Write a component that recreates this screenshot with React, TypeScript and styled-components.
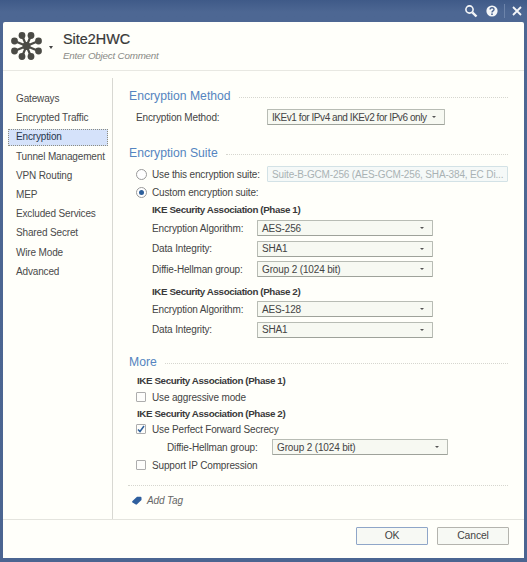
import styled, { createGlobalStyle } from "styled-components";

const Global = createGlobalStyle`
  html, body { margin: 0; padding: 0; }
  body { background: #4a6491; font-family: "Liberation Sans", Arial, sans-serif; }
`;

const Frame = styled.div`
  width: 527px;
  height: 562px;
  background: linear-gradient(#3f5a88, #4d6793 12px, #4b6591);
  display: flex;
  flex-direction: column;
  padding: 0 3px 4px;
  box-sizing: border-box;
  overflow: hidden;
`;

const TitleBar = styled.div`
  height: 22px;
  flex: none;
  display: flex;
  align-items: center;
  justify-content: flex-end;
  padding-right: 2px;
  color: #f4f6f8;
  svg { display: block; }
`;

const HelpIcon = styled.svg`
  margin-left: 8px;
`;

const TitleSep = styled.span`
  width: 1px;
  height: 14px;
  background: #6d84aa;
  margin: 0 7px 0 6px;
`;

const Dialog = styled.div`
  flex: 1;
  min-height: 0;
  background: #fffffa;
  border-radius: 2px 2px 0 0;
  display: flex;
  flex-direction: column;
  color: #444;
  letter-spacing: -0.15px;
`;

const Header = styled.div`
  height: 49px;
  flex: none;
  box-sizing: border-box;
  border-bottom: 1px solid #e8e8e2;
  display: flex;
  align-items: center;
  padding-left: 8px;
`;

const Caret = styled.span`
  width: 0;
  height: 0;
  margin: 3px 10px 0 7px;
  border-left: 2.5px solid transparent;
  border-right: 2.5px solid transparent;
  border-top: 3px solid #444;
`;

const HeadText = styled.div`
  display: flex;
  flex-direction: column;
`;

const ObjectName = styled.div`
  font-size: 14.4px;
  line-height: 19px;
  color: #383838;
  letter-spacing: 0;
  -webkit-text-stroke: 0.2px #383838;
`;

const Comment = styled.div`
  font-size: 9.8px;
  line-height: 13px;
  font-style: italic;
  letter-spacing: -0.2px;
  color: #8a8a86;
`;

const Main = styled.div`
  flex: 1;
  min-height: 0;
  display: flex;
  padding-top: 7px;
`;

const Sidebar = styled.div`
  width: 110px;
  height: 442px;
  box-sizing: border-box;
  flex: none;
  border-right: 1px solid #d8d8d2;
  padding: 13px 4px 0 5px;
  display: flex;
  flex-direction: column;
  gap: 2.2px;
`;

const NavItem = styled.div<{ $active?: boolean }>`
  height: 17px;
  line-height: 16px;
  font-size: 10px;
  padding-left: 8px;
  box-sizing: border-box;
  white-space: nowrap;
  color: #4a4a4a;
  ${(p) => p.$active && `
    background: #d5e2fa;
    outline: 1px dotted #8d8d80;
    outline-offset: -1px;
    color: #26364e;
  `}
`;

const Content = styled.div`
  flex: 1;
  padding: 0 16px 0 15px;
  display: flex;
  flex-direction: column;
`;

const Heading = styled.div<{ $gap?: number }>`
  display: flex;
  align-items: center;
  gap: 8px;
  height: 18px;
  margin-top: ${(p) => p.$gap ?? 0}px;
  padding-left: 1px;
  color: #5585c0;
  font-size: 12.2px;
  letter-spacing: 0;
  white-space: nowrap;
  &::after {
    content: "";
    flex: 1;
    border-top: 1px dotted #d6d6cf;
    margin-top: 2px;
  }
`;

const Row = styled.div<{ $indent?: number; $h?: number; $label?: number; $top?: number }>`
  display: flex;
  align-items: center;
  height: ${(p) => p.$h ?? 16}px;
  margin-top: ${(p) => p.$top ?? 0}px;
  padding-left: ${(p) => p.$indent ?? 0}px;
  font-size: 10px;
  white-space: nowrap;
  & > label {
    width: ${(p) => p.$label ?? 105}px;
    flex: none;
  }
`;

const Bold = styled(Row)`
  font-weight: 700;
  color: #3a3a3a;
  font-size: 9.8px;
  letter-spacing: -0.4px;
`;

const Select = styled.div<{ $w: number; $disabled?: boolean; $tight?: boolean }>`
  width: ${(p) => p.$w}px;
  height: 16px;
  flex: none;
  box-sizing: border-box;
  display: flex;
  align-items: center;
  justify-content: space-between;
  padding: 0 8px 0 4px;
  letter-spacing: ${(p) => (p.$tight ? "-0.44px" : "inherit")};
  background: ${(p) => (p.$disabled ? "#f5f9f8" : "#f7f9f2")};
  border: 1px solid ${(p) => (p.$disabled ? "#d3e2e6" : "#b8bcb4")};
  border-bottom-color: ${(p) => (p.$disabled ? "#d3e2e6" : "#9ea29a")};
  border-radius: 1px;
  color: ${(p) => (p.$disabled ? "#a9b2b4" : "#444")};
  overflow: hidden;
  &::after {
    content: "";
    flex: none;
    margin-left: 4px;
    border-left: 2px solid transparent;
    border-right: 2px solid transparent;
    border-top: 2px solid ${(p) => (p.$disabled ? "#a9b2b4" : "#555")};
  }
`;

const Radio = styled.span<{ $on?: boolean }>`
  width: 11px;
  height: 11px;
  flex: none;
  margin-right: 5px;
  box-sizing: border-box;
  border-radius: 50%;
  border: 1px solid #9a9a9a;
  background: #fff;
  display: flex;
  align-items: center;
  justify-content: center;
  &::after {
    content: "";
    width: 5px;
    height: 5px;
    border-radius: 50%;
    background: ${(p) => (p.$on ? "#2d5f9a" : "transparent")};
  }
`;

const Check = styled.span`
  width: 10px;
  height: 10px;
  flex: none;
  margin-right: 6px;
  box-sizing: border-box;
  border: 1px solid #adadad;
  border-radius: 1px;
  background: #fdfdfb;
  display: flex;
  svg { display: block; }
`;

const TagRow = styled.div`
  border-top: 1px dotted #d6d6cf;
  margin-top: 12px;
  padding: 6px 0 0 4px;
  display: flex;
  align-items: center;
  gap: 5px;
  font-size: 10px;
  font-style: italic;
  color: #666;
  height: 16px;
`;

const Footer = styled.div`
  height: 31px;
  flex: none;
  border-top: 1px solid #e4e4de;
  display: flex;
  justify-content: flex-end;
  align-items: flex-start;
  gap: 9px;
  padding: 7px 15px 0 0;
`;

const Button = styled.div<{ $primary?: boolean }>`
  width: 72px;
  height: 18px;
  box-sizing: border-box;
  border: 1px solid ${(p) => (p.$primary ? "#8fa6c8" : "#b4b4ae")};
  border-radius: 1px;
  background: #f7f9f4;
  font-size: 10.4px;
  line-height: 16px;
  text-align: center;
  color: #444;
`;

const Logo = () => {
  const nodes = [
    [11, 4], [20, 4], [3.5, 9.5], [27.5, 9.5], [3.5, 19.5], [27.5, 19.5], [11, 25], [20, 25],
  ];
  return (
    <svg width="31" height="30" viewBox="0 0 31 29">
      {nodes.map(([x, y], i) => (
        <line key={i} x1="15.5" y1="14.5" x2={x} y2={y} stroke="#4b4b45" strokeWidth="2.2" />
      ))}
      {nodes.map(([x, y], i) => (
        <circle key={i} cx={x} cy={y} r="3.4" fill="#4b4b45" />
      ))}
      <circle cx="15.5" cy="14.5" r="4" fill="#4b4b45" />
    </svg>
  );
};

const navItems = [
  "Gateways",
  "Encrypted Traffic",
  "Encryption",
  "Tunnel Management",
  "VPN Routing",
  "MEP",
  "Excluded Services",
  "Shared Secret",
  "Wire Mode",
  "Advanced",
];

export default function App() {
  return (
    <>
      <Global />
      <Frame>
        <TitleBar>
          <svg width="14" height="14" viewBox="0 0 14 14" fill="none" stroke="currentColor">
            <circle cx="5.5" cy="5.5" r="3.6" strokeWidth="1.6" />
            <path d="M8.3 8.3l4.2 4.2" strokeWidth="2.4" />
          </svg>
          <HelpIcon width="12" height="12" viewBox="0 0 12 12">
            <circle cx="6" cy="6" r="5.6" fill="currentColor" />
            <path d="M4.1 4.6c0-2.4 3.9-2.4 3.9-.2 0 1.4-2 1.5-2 3" fill="none" stroke="#4b6591" strokeWidth="1.4" />
            <circle cx="6" cy="9.2" r="0.9" fill="#4b6591" />
          </HelpIcon>
          <TitleSep />
          <svg width="10" height="10" viewBox="0 0 10 10" stroke="currentColor" strokeWidth="1.8">
            <path d="M1 1l8 8M9 1l-8 8" />
          </svg>
        </TitleBar>
        <Dialog>
          <Header>
            <Logo />
            <Caret />
            <HeadText>
              <ObjectName>Site2HWC</ObjectName>
              <Comment>Enter Object Comment</Comment>
            </HeadText>
          </Header>
          <Main>
            <Sidebar>
              {navItems.map((n) => (
                <NavItem key={n} $active={n === "Encryption"}>{n}</NavItem>
              ))}
            </Sidebar>
            <Content>
              <Heading $gap={9}>Encryption Method</Heading>
              <Row $indent={8} $h={16} $label={131} $top={4}>
                <label>Encryption Method:</label>
                <Select $w={178} $tight>IKEv1 for IPv4 and IKEv2 for IPv6 only</Select>
              </Row>
              <Heading $gap={19}>Encryption Suite</Heading>
              <Row $indent={8} $h={18} $label={115} $top={3}>
                <Radio />
                <label>Use this encryption suite:</label>
                <Select $w={241} $disabled>Suite-B-GCM-256 (AES-GCM-256, SHA-384, EC Di...</Select>
              </Row>
              <Row $indent={8} $h={18}>
                <Radio $on />
                Custom encryption suite:
              </Row>
              <Bold $indent={24} $h={16}>IKE Security Association (Phase 1)</Bold>
              <Row $indent={24} $h={20} $top={1}>
                <label>Encryption Algorithm:</label>
                <Select $w={176}>AES-256</Select>
              </Row>
              <Row $indent={24} $h={21}>
                <label>Data Integrity:</label>
                <Select $w={176}>SHA1</Select>
              </Row>
              <Row $indent={24} $h={20}>
                <label>Diffie-Hellman group:</label>
                <Select $w={176}>Group 2 (1024 bit)</Select>
              </Row>
              <Bold $indent={24} $h={16} $top={4}>IKE Security Association (Phase 2)</Bold>
              <Row $indent={24} $h={20}>
                <label>Encryption Algorithm:</label>
                <Select $w={176}>AES-128</Select>
              </Row>
              <Row $indent={24} $h={21}>
                <label>Data Integrity:</label>
                <Select $w={176}>SHA1</Select>
              </Row>
              <Heading $gap={13}>More</Heading>
              <Bold $indent={9} $h={18}>IKE Security Association (Phase 1)</Bold>
              <Row $indent={8} $h={16}>
                <Check />
                Use aggressive mode
              </Row>
              <Bold $indent={9} $h={16}>IKE Security Association (Phase 2)</Bold>
              <Row $indent={8} $h={16}>
                <Check>
                  <svg width="8" height="8" viewBox="0 0 8 8" fill="none" stroke="#2d5f9a" strokeWidth="1.5">
                    <path d="M1 4.5l2 2 4-5.5" />
                  </svg>
                </Check>
                Use Perfect Forward Secrecy
              </Row>
              <Row $indent={39} $h={20} $label={105}>
                <label>Diffie-Hellman group:</label>
                <Select $w={176}>Group 2 (1024 bit)</Select>
              </Row>
              <Row $indent={8} $h={16}>
                <Check />
                Support IP Compression
              </Row>
              <TagRow>
                <svg width="10" height="9" viewBox="0 0 10 9">
                  <path d="M0.5 5L5 0.8h3.5a1 1 0 0 1 1 1V4L5 8.3a1.2 1.2 0 0 1-1.6 0L0.5 6.5a1 1 0 0 1 0-1.5z" fill="#2f5f9e" />
                </svg>
                Add Tag
              </TagRow>
            </Content>
          </Main>
          <Footer>
            <Button $primary>OK</Button>
            <Button>Cancel</Button>
          </Footer>
        </Dialog>
      </Frame>
    </>
  );
}
